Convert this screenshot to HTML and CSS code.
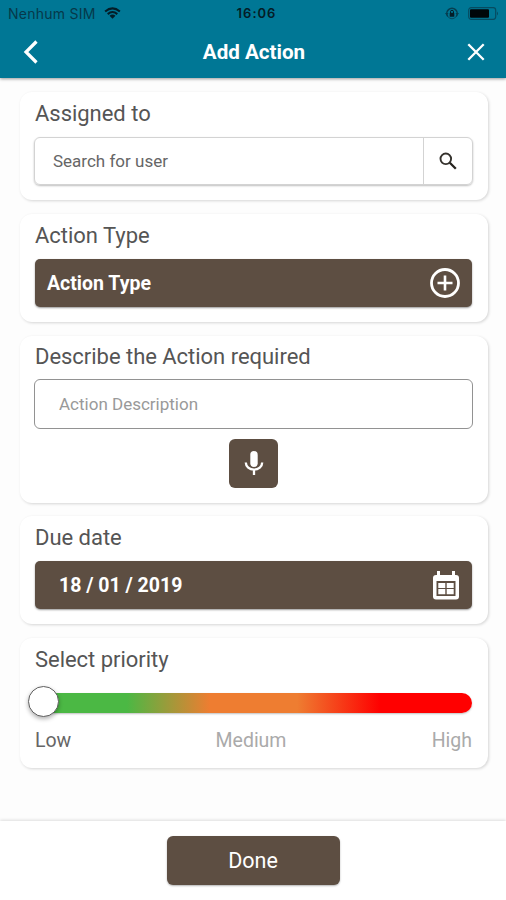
FILE: index.html
```html
<!DOCTYPE html>
<html lang="en">
<head>
<meta charset="utf-8">
<title>Add Action</title>
<link rel="stylesheet" href="styles.css">
</head>
<body>
<header class="header">
  <div class="status">
    <div class="carrier"><span class="carrier-name">Nenhum SIM</span>
      <svg class="wifi" viewBox="0 0 18 13"><g fill="none" stroke="#041d27" stroke-width="2.2"><path d="M1 4.8Q9-1.8 17 4.8"/><path d="M3.8 7.7Q9 3.2 14.2 7.7"/></g><path d="M5.8 9.5Q9 6.6 12.2 9.5L9 12.8Z" fill="#041d27"/></svg>
    </div>
    <span class="clock">16:06</span>
    <div class="indicators">
      <svg class="lock" viewBox="0 0 14 13"><path d="M2.8 9.6A5.2 5.2 0 1 1 11.2 9.6" fill="none" stroke="#063e50" stroke-width="1.5"/><path d="M0 6h3.6L1.8 8.5ZM10.4 6H14l-1.8 2.500Z" fill="#063e50"/><path d="M2.800 9.600Q7 14 11.200 9.600" fill="none" stroke="#064b60"/><path d="M5.500 6V4.800a1.500 1.500 0 0 1 3 0V6" fill="none" stroke="#041d27"/><rect x="4.700" y="5.800" width="4.600" height="4" rx=".6" fill="#041d27"/></svg>
      <svg class="battery" viewBox="0 0 31 13"><rect x=".7" y=".7" width="27" height="11.600" rx="2.500" fill="none" stroke="#064b60" stroke-width="1.200"/><rect x="2" y="2.200" width="19" height="8.600" rx="1" fill="#000609"/><path d="M29 4.500q2 2 0 4Z" fill="#064b60"/></svg>
    </div>
  </div>
  <div class="navbar">
    <svg class="back" viewBox="0 0 16 24"><path d="M13.500 1.500 3 12l10.500 10.500" fill="none" stroke="#fff" stroke-width="3.200"/></svg>
    <h1 class="title">Add Action</h1>
    <svg class="close" viewBox="0 0 18 18"><path d="M1.300 1.300 16.700 16.700M16.700 1.300 1.300 16.700" stroke="#fff" stroke-width="2.300"/></svg>
  </div>
</header>
<main class="form">
  <section class="card">
    <h2 class="label">Assigned to</h2>
    <div class="field search">
      <span class="search-text">Search for user</span>
      <div class="search-button"><svg class="magnifier" viewBox="0 0 18 18"><circle cx="6.800" cy="6.800" r="5.300" fill="none" stroke="#35322d" stroke-width="1.900"/><path d="m10.800 10.800 6 6" stroke="#25221d" stroke-width="2.300"/></svg></div>
    </div>
  </section>
  <section class="card">
    <h2 class="label">Action Type</h2>
    <div class="field picker">
      <span class="picker-text">Action Type</span>
      <svg class="plus" viewBox="0 0 30 30"><circle cx="15" cy="15" r="13.500" fill="none" stroke="#fff" stroke-width="2.800"/><path d="M15 7.500v15M7.500 15h15" stroke="#fff" stroke-width="2.600"/></svg>
    </div>
  </section>
  <section class="card card-describe">
    <h2 class="label">Describe the Action required</h2>
    <div class="field description"><span class="description-text">Action Description</span></div>
    <div class="mic-button"><svg class="mic" viewBox="0 0 20 26"><rect x="6.300" y="1" width="7.400" height="16" rx="3.700" fill="#fff"/><path d="M1.800 12.500a8.200 7.200 0 0 0 16.400 0M10 19.500V25" fill="none" stroke="#fff" stroke-width="2.300"/></svg></div>
  </section>
  <section class="card">
    <h2 class="label">Due date</h2>
    <div class="field picker">
      <span class="date-text">18 / 01 / 2019</span>
      <svg class="calendar" viewBox="0 0 26 29"><path d="M3 4h20a3 3 0 0 1 3 3v18.500a3 3 0 0 1-3 3H3a3 3 0 0 1-3-3V7a3 3 0 0 1 3-3Z" fill="#fff"/><path d="M5.500 0v6M20.500 0v6" stroke="#fff" stroke-width="3"/><path d="M3.500 10h19v15h-19Z" fill="#5d4e42"/><path d="M5.300 12h7v5H5.300ZM13.700 12h7v5H13.700ZM5.300 18h7v5.200H5.300ZM13.700 18h7v5.200H13.700Z" fill="#fff"/></svg>
    </div>
  </section>
  <section class="card">
    <h2 class="label">Select priority</h2>
    <div class="slider"><div class="thumb"></div></div>
    <div class="levels"><span class="low">Low</span><span class="medium">Medium</span><span class="high">High</span></div>
  </section>
</main>
<footer class="footer"><div class="done">Done</div></footer>
</body>
</html>
```

FILE: styles.css
```css
* { box-sizing: border-box; }
body {
  margin: 0;
  width: 506px;
  height: 900px;
  overflow: hidden;
  display: flex;
  flex-direction: column;
  background: #fdfdfd;
  font-family: Roboto, sans-serif;
  color: #555;
}
svg { display: block; flex: none; }
.header {
  height: 78px;
  flex: none;
  background: #007795;
  box-shadow: 0 1px 3px rgba(0, 0, 0, .4);
}
.status {
  height: 26px;
  padding: 0 7px 0 8px;
  display: grid;
  grid-template-columns: 1fr auto 1fr;
  align-items: center;
  font-family: Inter, sans-serif;
  font-size: 13px;
  color: #041d27;
}
.carrier { display: flex; align-items: center; gap: 8px; }
.carrier-name { color: #06394a; font-size: 14px; letter-spacing: .25px; }
.wifi { width: 17px; height: 12px; }
.clock { padding-left: 6px; font-weight: 600; letter-spacing: 1px; }
.indicators { display: flex; justify-content: flex-end; align-items: center; gap: 9px; }
.lock { width: 14px; height: 13px; }
.battery { width: 31px; height: 13px; }
.navbar {
  height: 52px;
  padding: 0 21px 0 23px;
  display: grid;
  grid-template-columns: 1fr auto 1fr;
  align-items: center;
}
.back { width: 16px; height: 24px; }
.title { margin: 0; font-size: 20.6px; font-weight: 700; color: #fff; }
.close { width: 18px; height: 18px; justify-self: end; }
.form {
  height: 743px;
  flex: none;
  padding: 14px 18px 0 20px;
  display: flex;
  flex-direction: column;
  gap: 14px;
}
.card {
  padding: 10px 16px 15px 15px;
  border-radius: 12px;
  background: #fff;
  box-shadow: 1px 1px 3px rgba(0, 0, 0, .16);
}
.card-describe { padding-top: 9px; padding-bottom: 15px; }
.label {
  margin: 0 0 11px;
  font-size: 22px;
  line-height: 24px;
  font-weight: 400;
  letter-spacing: -.03px;
  white-space: nowrap;
}
.field {
  height: 48px;
  border-radius: 5px;
  display: flex;
  align-items: center;
  justify-content: space-between;
  white-space: nowrap;
}
.search {
  margin: 0 -1px;
  border: 1px solid #d3d3d3;
  border-radius: 6px;
  padding-left: 18px;
  box-shadow: 0 1px 2px rgba(0, 0, 0, .25);
}
.search-text { padding-bottom: 1px; font-size: 17px; color: #666; }
.search-button {
  width: 49px;
  height: 100%;
  border-left: 1px solid #d3d3d3;
  display: grid;
  place-items: center;
}
.magnifier { width: 18px; height: 18px; }
.picker {
  padding: 0 12px;
  background: #5d4e42;
  color: #fff;
  font-size: 19.5px;
  font-weight: 700;
  box-shadow: 0 1px 2px rgba(0, 0, 0, .4);
}
.plus { width: 30px; height: 30px; }
.date-text { padding-left: 12px; }
.calendar { width: 26px; height: 29px; margin-right: 1px; }
.description {
  height: 50px;
  margin: -1px -1px 0;
  padding-left: 24px;
  border: 1px solid #929292;
  border-radius: 6px;
}
.description-text { font-size: 17px; color: #999; }
.mic-button {
  width: 49px;
  height: 49px;
  margin: 10px auto 0;
  border-radius: 6px;
  background: #5d4e42;
  display: grid;
  place-items: center;
}
.card-describe { margin-bottom: -1px; }
.mic { width: 20px; height: 26px; margin-bottom: 2px; }
.slider {
  position: relative;
  height: 20px;
  margin-top: 21px;
  border-radius: 10px;
  background: linear-gradient(90deg, #4bb844 21%, #ee7d31 40%, #ee7d31 60%, #f00 79%);
  box-shadow: 0 1px 2px rgba(0, 0, 0, .25);
}
.thumb {
  position: absolute;
  left: -7px;
  top: -7px;
  width: 31px;
  height: 31px;
  border: 1px solid #606060;
  border-radius: 50%;
  background: #fff;
  box-shadow: 0 2px 4px rgba(0, 0, 0, .3);
}
.levels {
  margin-top: 16px;
  display: grid;
  grid-template-columns: 1fr auto 1fr;
  font-size: 19.5px;
  line-height: 24px;
  color: #aaa;
}
.low { color: #666; }
.medium { margin-right: 5px; }
.high { text-align: right; }
.footer {
  height: 79px;
  flex: none;
  padding-top: 15px;
  display: flex;
  justify-content: center;
  background: #fff;
  box-shadow: 0 -1px 3px rgba(0, 0, 0, .13);
}
.done {
  width: 173px;
  height: 49px;
  border-radius: 6px;
  background: #5d4e42;
  color: #fff;
  display: grid;
  place-items: center;
  font-size: 21.5px;
  box-shadow: 0 1px 2px rgba(0, 0, 0, .3);
}
```
